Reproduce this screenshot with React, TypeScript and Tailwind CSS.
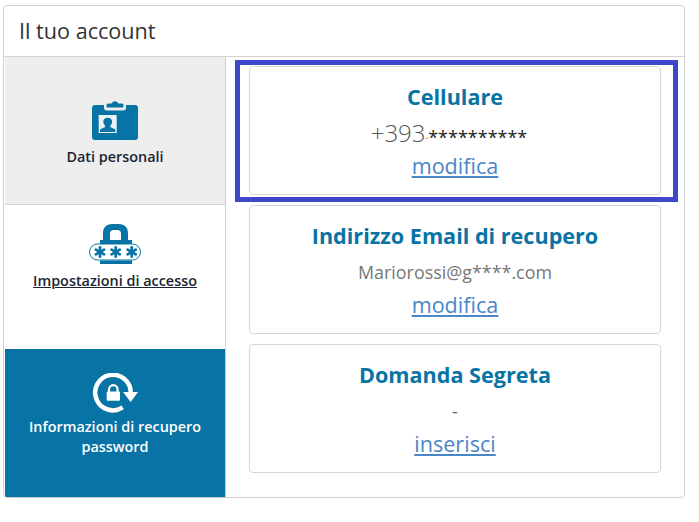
const TEAL = "#0873a5";

function BadgeIcon() {
  return (
    <svg width="46" height="40" viewBox="0 0 46 40">
      <path d="M3 5h9v2.500a3 3 0 0 0 3 3h16a3 3 0 0 0 3-3V5h9a3 3 0 0 1 3 3v29a3 3 0 0 1-3 3H3a3 3 0 0 1-3-3V8a3 3 0 0 1 3-3z" fill={TEAL} />
      <path d="M14.500 6.500V5a1.500 1.500 0 0 1 1.500-1.500h3.700a3.500 3.500 0 0 1 6.600 0H30A1.500 1.500 0 0 1 31.500 5v1.500a1 1 0 0 1-1 1h-15a1 1 0 0 1-1-1z" fill={TEAL} />
      <rect x="6.700" y="15" width="18" height="18" fill="#e9f2f6" />
      <path d="M8 32v-1.800c0-1.500 3.500-2 5-3.200v-1.500c-1.200-1-1.700-2.500-1.700-4 0-2.400 1.900-3.800 4.400-3.800s4.400 1.400 4.400 3.800c0 1.500-.5 3-1.700 4V27c1.500 1.200 5 1.700 5 3.200V32z" fill={TEAL} />
    </svg>
  );
}

function LockKeysIcon() {
  return (
    <svg width="54" height="40" viewBox="0 0 54 40">
      <path d="M15 16V9C15 3.500 18.500 0 24 0h7c5.500 0 9 3.500 9 9v7h4v4H12v-4zM22 16h11V9.500C33 7.500 31.500 6 29.500 6h-4C23.500 6 22 7.500 22 9.500z" fill={TEAL} fillRule="evenodd" />
      <rect x="1.500" y="20" width="51" height="16" rx="8" fill="#fff" stroke={TEAL} strokeWidth="1" />
      <rect x="12" y="36.500" width="32" height="3.500" fill={TEAL} />
      {[12, 27.700, 43.700].map((cx) => (
        <g key={cx} stroke={TEAL} strokeWidth="2.700" strokeLinecap="round">
          <line x1={cx} y1="23.300" x2={cx} y2="32.700" />
          <line x1={cx - 4.100} y1="25.600" x2={cx + 4.100} y2="30.400" />
          <line x1={cx - 4.100} y1="30.400" x2={cx + 4.100} y2="25.600" />
        </g>
      ))}
    </svg>
  );
}

function RecoveryIcon() {
  return (
    <svg width="46" height="41" viewBox="0 0 46 41">
      <path d="M38.700 19.500A17.750 17.750 0 1 0 30.700 34.400" fill="none" stroke="#fff" strokeWidth="4.500" />
      <path d="M31 19h15L38.700 29z" fill="#fff" />
      <path d="M17 19v-2.500a4.300 4.300 0 0 1 8.600 0V19" fill="none" stroke="#fff" strokeWidth="2.200" />
      <rect x="14.700" y="18.500" width="13.300" height="9.200" rx="1" fill="#fff" />
    </svg>
  );
}

function SideItem({
  icon,
  label,
  className,
  labelClass,
}: {
  icon: React.ReactNode;
  label: React.ReactNode;
  className: string;
  labelClass: string;
}) {
  return (
    <div className={`flex flex-col items-center text-center ${className}`}>
      {icon}
      <div className={`text-[14.4px] leading-[20px] font-semibold ${labelClass}`}>{label}</div>
    </div>
  );
}

function InfoCard({ title, link, children }: { title: string; link: string; children: React.ReactNode }) {
  return (
    <div className="h-[129px] w-[412px] rounded-[4px] border border-[#d6d6d6] bg-white flex flex-col items-center">
      <h2 className="mt-[15px] text-[21.6px] leading-[30px] font-bold text-[#0873a5]">{title}</h2>
      <div className="h-[26px] mt-[8px] flex items-center">{children}</div>
      <a className="mt-[5px] text-[21.6px] leading-[30px] text-[#4a86c8] underline">{link}</a>
    </div>
  );
}

export default function App() {
  return (
    <div className="w-[699px] h-[522px] bg-white pt-[5px] pl-[3px] font-['Open_Sans',sans-serif]">
      <div className="w-[682px] h-[493px] rounded-[4px] border border-[#cfcfcf] overflow-hidden flex flex-col">
        <div className="h-[51px] shrink-0 border-b border-[#d4d4d4] pl-[15px] flex items-center">
          <h1 className="text-[21.6px] leading-[30px] text-[#333]">Il tuo account</h1>
        </div>
        <div className="flex flex-1 pl-px">
          <div className="w-[221px] shrink-0 border-r border-[#cfcfcf] flex flex-col">
            <SideItem
              className="h-[148px] shrink-0 bg-[#eeeeee] border-b border-[#d4d4d4] pt-[43px] gap-[7px]"
              labelClass="text-[#1c2433]"
              icon={<BadgeIcon />}
              label="Dati personali"
            />
            <SideItem
              className="h-[144px] shrink-0 bg-white pt-[19px] gap-[7px]"
              labelClass="text-[#1c2433] underline"
              icon={<LockKeysIcon />}
              label="Impostazioni di accesso"
            />
            <SideItem
              className="flex-1 bg-[#0873a5] pt-[24px] gap-[3px]"
              labelClass="text-white"
              icon={<RecoveryIcon />}
              label={
                <>
                  Informazioni di recupero
                  <br />
                  password
                </>
              }
            />
          </div>
          <div className="flex flex-col gap-[10px] pt-[9px] pl-[23px]">
            <div className="relative">
              <InfoCard title="Cellulare" link="modifica">
                <div className="flex items-center pr-[12px]">
                  <span className="font-light text-[24px] leading-[26px] text-[#555]">+393</span>
                  <span className="text-[10px] leading-[26px] text-[#555] mt-[4px]">.</span>
                  <span className="text-[18px] leading-[26px] font-medium text-[#222] mt-[8px]">**********</span>
                </div>
              </InfoCard>
              <div className="absolute left-[-14px] right-[-17px] top-[-6px] bottom-[-7px] border-[5px] border-[#3f48cc] pointer-events-none" />
            </div>
            <InfoCard title="Indirizzo Email di recupero" link="modifica">
              <span className="text-[17.9px] leading-[26px] text-[#777]">Mariorossi@g****.com</span>
            </InfoCard>
            <InfoCard title="Domanda Segreta" link="inserisci">
              <span className="text-[17.9px] leading-[26px] text-[#666]">-</span>
            </InfoCard>
          </div>
        </div>
      </div>
    </div>
  );
}
